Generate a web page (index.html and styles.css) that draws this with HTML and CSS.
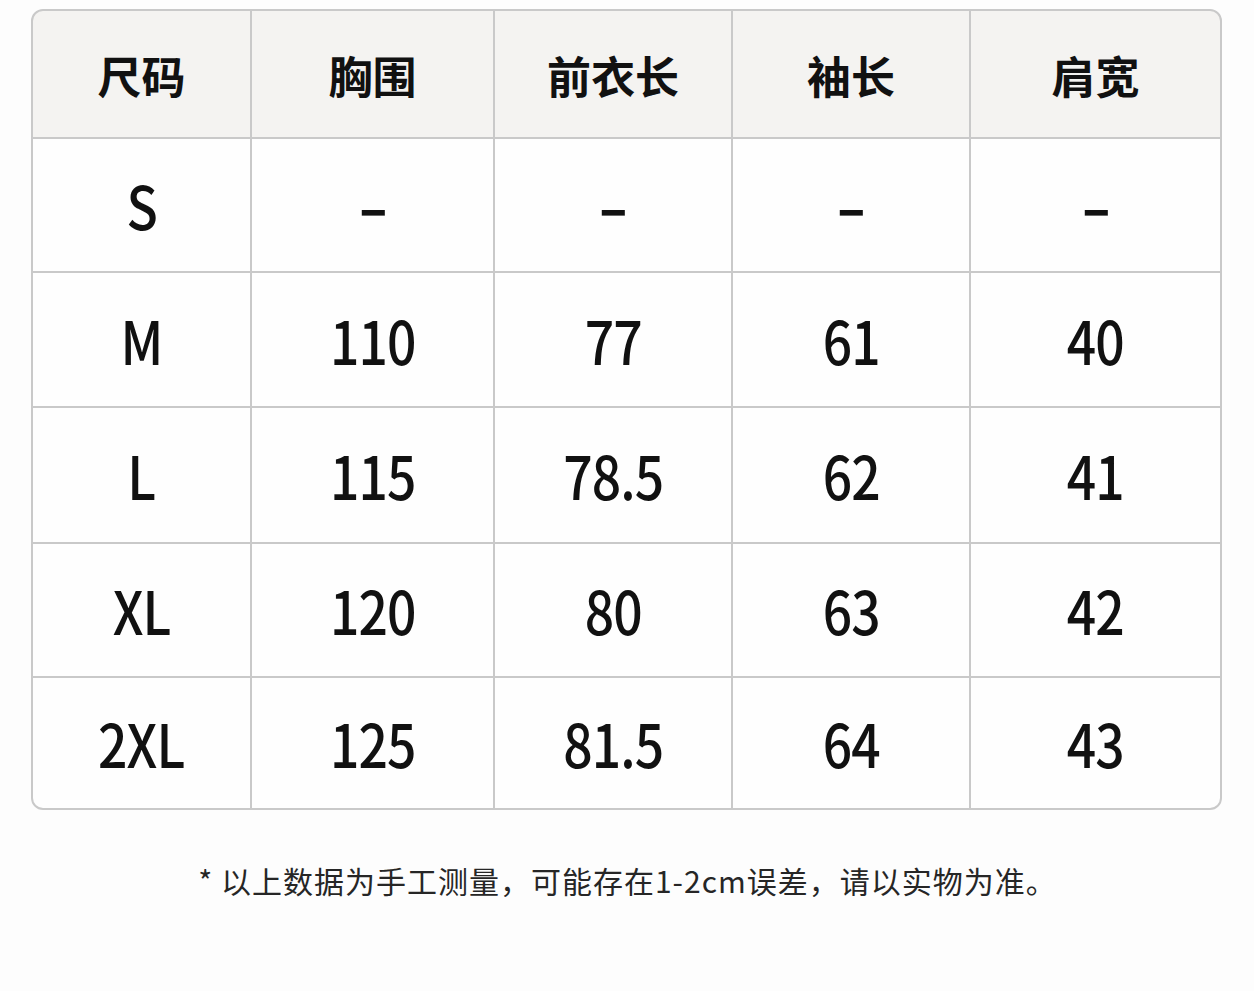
FILE: index.html
```html
<!DOCTYPE html>
<html lang="zh">
<head>
<meta charset="utf-8">
<link rel="stylesheet" href="styles.css">
</head>
<body>
<div class="page">
  <div class="table">
    <div class="cell head">尺码</div>
    <div class="cell head">胸围</div>
    <div class="cell head">前衣长</div>
    <div class="cell head">袖长</div>
    <div class="cell head">肩宽</div>

    <div class="cell"><span class="v">S</span></div>
    <div class="cell"><span class="v dash">–</span></div>
    <div class="cell"><span class="v dash">–</span></div>
    <div class="cell"><span class="v dash">–</span></div>
    <div class="cell"><span class="v dash">–</span></div>

    <div class="cell"><span class="v">M</span></div>
    <div class="cell"><span class="v">110</span></div>
    <div class="cell"><span class="v">77</span></div>
    <div class="cell"><span class="v">61</span></div>
    <div class="cell"><span class="v">40</span></div>

    <div class="cell"><span class="v">L</span></div>
    <div class="cell"><span class="v">115</span></div>
    <div class="cell"><span class="v">78.5</span></div>
    <div class="cell"><span class="v">62</span></div>
    <div class="cell"><span class="v">41</span></div>

    <div class="cell"><span class="v">XL</span></div>
    <div class="cell"><span class="v">120</span></div>
    <div class="cell"><span class="v">80</span></div>
    <div class="cell"><span class="v">63</span></div>
    <div class="cell"><span class="v">42</span></div>

    <div class="cell"><span class="v">2XL</span></div>
    <div class="cell"><span class="v">125</span></div>
    <div class="cell"><span class="v">81.5</span></div>
    <div class="cell"><span class="v">64</span></div>
    <div class="cell"><span class="v">43</span></div>
  </div>
  <p class="note">* 以上数据为手工测量，可能存在1-2cm误差，请以实物为准。</p>
</div>
</body>
</html>
```

FILE: styles.css
```css
html, body {
  margin: 0;
  padding: 0;
  background: #fdfdfd;
}
.page {
  padding: 9px 32px 0 31px;
  font-family: "Noto Sans CJK SC", "Noto Sans", sans-serif;
}
.table {
  display: grid;
  grid-template-columns: 217px 241px 236px 236px 249px;
  grid-template-rows: 126px 132px 133px 134px 132px 130px;
  gap: 2px;
  background: #c9c9c9;
  border: 2px solid #c9c9c9;
  border-radius: 12px;
  overflow: hidden;
  width: 1187px;
}
.cell {
  background: #fefefe;
  display: flex;
  align-items: center;
  justify-content: center;
  font-size: 60px;
  font-weight: 500;
  color: #111;
  line-height: 1;
}
.v {
  display: inline-block;
  transform: scaleX(0.86);
  letter-spacing: -1px;
  margin-top: -2px;
}
.head {
  background: #f4f3f1;
  font-size: 44px;
  font-weight: 700;
  padding-top: 2px;
}
.dash {
  font-weight: 700;
}
.note {
  margin: 50px 0 0 0;
  text-align: center;
  font-size: 30px;
  line-height: 40px;
  letter-spacing: 1px;
  color: #262626;
  padding-left: 2px;
}
```
